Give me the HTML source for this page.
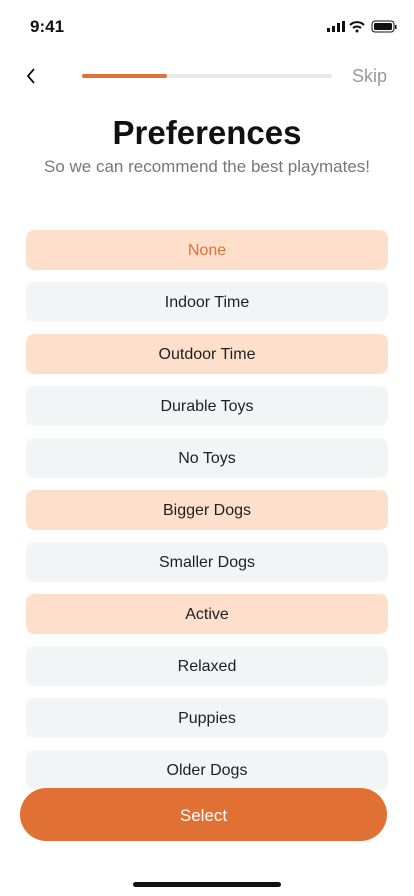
<!DOCTYPE html><html><head><style>
body{margin:0;width:414px;height:896px;background:#fff;font-family:"Liberation Sans",sans-serif;position:relative;overflow:hidden}
.a{position:absolute}
.it{position:absolute;left:26px;width:362px;height:40px;border-radius:8px;background:#f3f4f6;color:#1f1f1f;font-size:16px;text-align:center;line-height:42px}
.p{background:#fedfcc}
</style></head><body>
<div class="a" style="left:30px;top:17px;font-size:17px;font-weight:bold;color:#111">9:41</div>
<svg class="a" style="left:326px;top:20px" width="72" height="14"><rect x="1" y="8" width="3" height="4" fill="#111"/><rect x="6" y="6" width="3" height="6" fill="#111"/><rect x="11" y="3" width="3" height="9" fill="#111"/><rect x="16" y="1" width="3" height="11" fill="#111"/><path d="M24 5a10 10 0 0 1 14 0M27 8a6 6 0 0 1 8 0" stroke="#111" stroke-width="2" fill="none"/><circle cx="31" cy="11" r="1.5" fill="#111"/><rect x="46" y="1" width="22" height="11" rx="3" stroke="#111" fill="none"/><rect x="48" y="3" width="18" height="7" rx="1.5" fill="#111"/><rect x="69" y="5" width="1.5" height="4" fill="#111"/></svg>
<svg class="a" style="left:24px;top:67px" width="14" height="18"><path d="M10 2L4 9l6 7" stroke="#111" stroke-width="1.8" fill="none"/></svg>
<div class="a" style="left:82px;top:74px;width:250px;height:4px;border-radius:2px;background:#e8e9eb"></div>
<div class="a" style="left:82px;top:74px;width:85px;height:4px;border-radius:2px;background:#e07033"></div>
<div class="a" style="left:352px;top:66px;font-size:18px;color:#999">Skip</div>
<div class="a" style="left:0;width:414px;top:114px;text-align:center;font-size:33px;font-weight:bold;color:#111">Preferences</div>
<div class="a" style="left:0;width:414px;top:157px;text-align:center;font-size:17px;color:#777">So we can recommend the best playmates!</div>
<div class="it p" style="top:230px;color:#e07033">None</div>
<div class="it" style="top:282px">Indoor Time</div>
<div class="it p" style="top:334px">Outdoor Time</div>
<div class="it" style="top:386px">Durable Toys</div>
<div class="it" style="top:438px">No Toys</div>
<div class="it p" style="top:490px">Bigger Dogs</div>
<div class="it" style="top:542px">Smaller Dogs</div>
<div class="it p" style="top:594px">Active</div>
<div class="it" style="top:646px">Relaxed</div>
<div class="it" style="top:698px">Puppies</div>
<div class="it" style="top:750px">Older Dogs</div>
<div class="a" style="left:20px;top:788px;width:367px;height:53px;border-radius:27px;background:#e07033;color:#fff;font-size:17px;text-align:center;line-height:55px">Select</div>
<div class="a" style="left:133px;top:882px;width:148px;height:5px;border-radius:3px;background:#111"></div>
</body></html>
